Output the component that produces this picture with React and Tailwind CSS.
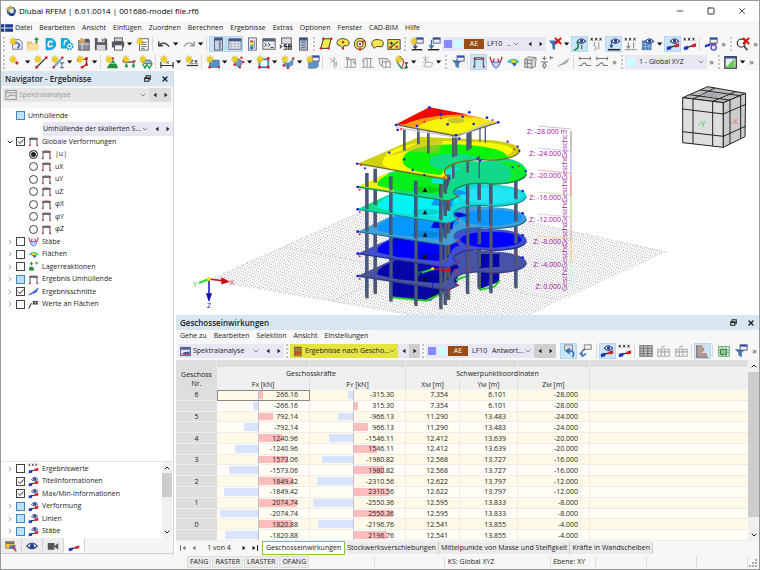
import { useState } from 'react';
import clsx from 'clsx';
import { ChevronDown, ChevronRight, ChevronUp, Minus, Square, X } from 'lucide-react';

const Star = () => (
  <path d="M4.5 0l.9 2.6 2.4-.9-1.2 2.4 2.4.9-2.4.9 1.2 2.3-2.4-.9-.9 2.5-.9-2.5-2.4.9 1.2-2.3-2.4-.9 2.4-.9-1.2-2.4 2.4.9z" fill="#f2cf1d" stroke="#b9a52c" strokeWidth=".3" />
);

const Eye = () => (
  <g>
    <path d="M5 5q4.500-6 9.500 0q-5 4.500-9.500 0z" fill="#fff" stroke="#28386f" strokeWidth="1.200" />
    <circle cx="9.800" cy="4.600" r="2" fill="#263d9b" />
  </g>
);

const Win = ({ x = 7, y = 1 }) => (
  <g>
    <rect x={x} y={y} width="8" height="6" fill="#eef" stroke="#44507c" />
    <rect x={x} y={y} width="8" height="2" fill="#3447a0" />
  </g>
);

const Beam = () => (
  <g>
    <path d="M1 11l5-1v4l-5 1z" fill="#1d35c8" />
    <path d="M5 11l6-2v1.500l-6 2z" fill="#222" />
    <path d="M10 8.500l5-1.500v4l-5 1z" fill="#d82121" />
  </g>
);

const Values = () => (
  <path d="M1 1l2 3m0-3l-2 3M6 1l2 3m0-3l-2 3M11 1l2 3m0-3l-2 3" stroke="#222" strokeWidth="1.100" />
);

const Cross = () => <path d="M8 1l7 7m0-7l-7 7" stroke="#e01010" strokeWidth="2.400" />;

const Dots = ({ points, color = '#d5202a', r = 1.4 }) =>
  points.map(([x, y]) => <circle key={`${x}-${y}`} cx={x} cy={y} r={r} fill={color} />);

const drawings = {
  app: <><path d="M2 6l4-4 6 1 3 5-2 5-6 2-4-4z" fill="#31569d" /><path d="M2 4l5-3 5 4-4 5-4-1z" fill="#c6ab55" /><circle cx="9" cy="8" r="3" fill="#dbe3ee" /><path d="M5 12l8 1-3 2z" fill="#172d62" /></>,
  flag: <><rect y="3" width="16" height="10" fill="#1b3b8e" /><path d="M0 8h16M5 3v10" stroke="#e6ebf7" strokeWidth="1.300" /></>,
  newModel: <><path d="M4 3h8l3 3v8H4z" fill="#e5eaf2" stroke="#68748c" /><path d="M6 8q3-3 6 1l-2 4" fill="none" stroke="#294f9e" strokeWidth="1.600" /><Star /></>,
  open: <><path d="M1 5h5l1 2h7v8H1z" fill="#e3c46f" /><path d="M3 8h12l-2 7H1z" fill="#f4dea0" /><path d="M11 7V3H9l3-3 3 3h-2v4z" fill="#259344" /></>,
  cloud: <><path d="M3 1h6q6 2 6 7t-6 7H3z" fill="#14a9e2" /><path d="M11 6q-4-3-5 2t5 2" fill="none" stroke="#fff" strokeWidth="2" /></>,
  cloudGear: <><path d="M1 1h7q4 2 4 6v6H1z" fill="#14a9e2" /><path d="M8 4q-4 0-3 5" fill="none" stroke="#fff" strokeWidth="1.500" /><circle cx="11" cy="10.500" r="3.500" fill="#fff" stroke="#1497d0" strokeWidth="2" strokeDasharray="2 1" /><circle cx="11" cy="10.500" r="1.300" fill="#1497d0" /></>,
  manager: <><rect x="2" y="4" width="12" height="11" fill="#8b929d" stroke="#555" /><path d="M2 8h12M6 4v11" stroke="#e7e7e7" /><path d="M4 1l7 2-3 5-6-3z" fill="#d4a667" /><rect x="9" y="2" width="5" height="4" fill="#4f5d78" /></>,
  save: <><path d="M1 1h12l2 2v12H1z" fill="#565a60" /><rect x="4" y="1" width="8" height="5" fill="#e9e9e9" /><rect x="3" y="9" width="10" height="6" fill="#d3d5d7" /><path d="M10 2v3" stroke="#555" strokeWidth="1.500" /></>,
  print: <><rect x="4" y="1" width="9" height="4" fill="#d3d3d3" stroke="#555" /><rect x="1" y="5" width="14" height="7" rx="1" fill="#565a60" /><rect x="4" y="9" width="9" height="6" fill="#f4f4f4" stroke="#555" /></>,
  report: <><rect x="4" y="2" width="10" height="13" fill="#fff" stroke="#555" /><path d="M6 6h6M6 8.500h6M6 11h6M6 13h4" stroke="#555" /><Star /></>,
  undo: <><path d="M2 5v5h5" fill="none" stroke="#3e4249" strokeWidth="1.700" /><path d="M2 10q6-7 12 1" fill="none" stroke="#3e4249" strokeWidth="1.700" /></>,
  redo: <><path d="M14 5v5H9" fill="none" stroke="#999" strokeWidth="1.500" /><path d="M14 10q-6-7-12 1" fill="none" stroke="#999" strokeWidth="1.500" /></>,
  navigator: <><rect x="4" y="1" width="9" height="14" fill="#ccd4e3" stroke="#555b68" /><rect x="4" y="1" width="9" height="3" fill="#44558b" /><path d="M10 5v9" stroke="#7781a1" strokeWidth="2" /></>,
  tables: <><rect x="1" y="2" width="14" height="12" fill="#e5e7ed" stroke="#646978" /><path d="M1 3.500h14" stroke="#44558b" strokeWidth="3" /><path d="M4 5v9M8 5v9M12 5v9M1 8h14M1 11h14" stroke="#a6abb7" strokeWidth=".7" /></>,
  colors: <><rect x="4" y="1" width="9" height="14" fill="#e5e9f2" stroke="#616977" /><path d="M6 4h3v2H6z" fill="#dd2424" /><path d="M6 6h3v3H6z" fill="#e8dc30" /><path d="M6 9h3v2H6z" fill="#35bf56" /><path d="M6 11h3v3H6z" fill="#3157cf" /><path d="M10.500 4v9" stroke="#666" /></>,
  console: <><rect x="1" y="2" width="14" height="12" fill="#e9eaee" stroke="#555" /><rect x="1" y="2" width="14" height="3" fill="#58637f" /><path d="M3 7l2 2-2 2M7 7l2 2-2 2M10 12h3" fill="none" stroke="#222" /></>,
  script: <><rect x="3" y="1" width="11" height="7" fill="#d7dce8" stroke="#555" /><rect x="1" y="8" width="14" height="7" fill="#fff" /><path d="M1 9l2 2-2 2M9 9H6v2h3v3H5M14 9h-3v5h3zM11 11h3" fill="none" stroke="#222" strokeWidth="1.200" /></>,
  info: <><rect x="4" y="1" width="9" height="14" fill="#bac3d5" stroke="#555" /><rect x="4" y="1" width="9" height="3" fill="#44558b" /><path d="M6 6h5M6 9h5M6 12h5" stroke="#6a7898" strokeWidth="1.500" /></>,
  selRhomb: <><path d="M5 2h9l-3 11H2z" fill="#f4e64c" stroke="#222" /><Dots points={[[5, 2], [14, 2], [11, 13], [2, 13]]} /></>,
  selEllipse: <><path d="M1 6q2-5 8-4t6 5-6 3l-1 3-3-3q-4 0-4-4z" fill="#f4e64c" stroke="#333" /><Dots points={[[8, 6], [8, 13]]} /></>,
  selRing: <><circle cx="8" cy="8" r="6.500" fill="#f4e64c" stroke="#333" /><circle cx="8" cy="8" r="3.500" fill="#fff" stroke="#333" /><Dots points={[[8, 8], [12, 5], [8, 14]]} /></>,
  selLasso: <><path d="M2 8q0-6 8-5t4 8H7l-2 2-1-2q-2 0-2-3z" fill="#f4e64c" stroke="#333" /></>,
  selPlus: <><rect x="1" y="3" width="14" height="11" fill="#f4e64c" stroke="#333" /><path d="M3 7h4M5 5v4M10 6h3M4 12l6-5" stroke="#333" strokeWidth="1.200" /><Dots points={[[4, 12], [11, 11]]} /></>,
  loadStar: <><path d="M6 5v7M3.500 10l2.500 3 2.500-3" fill="none" stroke="#223e83" strokeWidth="1.300" /><path d="M2 14.500h12" stroke="#222" strokeWidth="1.600" /><Win /><Star /></>,
  loadEdit: <><path d="M5 3v9M2.500 9l2.500 4 2.500-4" fill="none" stroke="#3166b8" strokeWidth="1.300" /><path d="M1 14.500h13" stroke="#222" strokeWidth="1.600" /><Win /></>,
  filterX: <><path d="M1 4h11L8 9v6l-3-2V9z" fill="#3f70b3" /><Cross /></>,
  springEye: <><path d="M1 15q5-1 5-5T4 6" fill="none" stroke="#23934a" strokeWidth="2" /><path d="M10 9v5" stroke="#333" /><Eye /></>,
  springVal: <><Values /><path d="M6 6q-3 3 0 5t-1 4M10 6v8" fill="none" stroke="#999" strokeWidth="1.300" /></>,
  loadEye: <><path d="M5 3v8M3 9l2 3 2-3" fill="none" stroke="#2954a0" strokeWidth="1.200" /><path d="M1 14.500h14" stroke="#222" strokeWidth="1.700" /><Eye /></>,
  loadVal: <><Values /><path d="M5 6v6M3 10l2 3 2-3M11 6v7" fill="none" stroke="#888" strokeWidth="1.200" /><path d="M1 14.500h14" stroke="#888" /></>,
  gridEye: <><rect x="1" y="4" width="11" height="11" fill="#4f80b7" /><path d="M1 8h11M1 11h11M5 4v11M9 4v11" stroke="#afd0ed" strokeWidth=".7" /><Eye /></>,
  beamEye: <><Beam /><Eye /></>,
  beamVal: <><Beam /><Values /></>,
  beam: <Beam />,
  beamWin: <><path d="M1 9l6-2v3l-6 2z" fill="#1d35c8" /><path d="M7 7h7v2H7z" fill="#d82121" /><Win /><circle cx="11" cy="12" r="3" fill="#e6eaff" stroke="#4257bb" strokeWidth="1.500" /></>,
  zoomX: <><circle cx="6" cy="7" r="4.500" fill="#fff" stroke="#444" strokeWidth="1.500" /><path d="M9 10l4 5" stroke="#444" strokeWidth="2" /><Cross /></>,
  node: <><Star /><Dots points={[[9, 9]]} r={1.8} /></>,
  line: <><path d="M3 14L14 3" stroke="#333" strokeWidth="1.400" /><Dots points={[[3, 14], [14, 3]]} r={1.7} /><Star /></>,
  member: <><path d="M3 14L13 3" stroke="#7ba2cd" strokeWidth="2.500" /><path d="M10 9h5M12.500 9v5M10 14.500h5" stroke="#55739b" strokeWidth="1.200" /><Dots points={[[3, 14], [13, 3]]} /><Star /></>,
  polyline: <><path d="M3 5h9v6l-5 3" fill="none" stroke="#8b2424" strokeWidth="1.600" /><Dots points={[[12, 4], [12, 11], [7, 14], [3, 6]]} r={1.7} /><Star /></>,
  support: <><path d="M9 5l-3 5 3-1 3 1z" fill="#1c953e" /><path d="M2 15l3-5h8l2 5z" fill="#1c953e" /><Dots points={[[9, 4]]} /><Star /></>,
  lineSupport: <><path d="M2 8h12" stroke="#333" strokeWidth="1.400" /><path d="M5 8l-2 6h4zM13 8l-2 6h4z" fill="#1c953e" /><Dots points={[[2, 7], [14, 7]]} /><Star /></>,
  surfSupport: <><path d="M3 6h10l2 4H6z" fill="#8bb6d8" stroke="#467" /><path d="M4 10l3 5 2-4 3 4 3-5" fill="none" stroke="#1c953e" strokeWidth="1.500" /><Star /></>,
  dimension: <><path d="M1 8v7M15 8v7M1 12h14" stroke="#333" strokeWidth="1.300" /><path d="M7 7l3 3m0-3l-3 3" stroke="#333" /><Star /></>,
  dimensionX: <><path d="M2 12h13" stroke="#333" strokeWidth="1.400" /><path d="M6 6l3 4m0-4l-3 4M11 6l3 4m0-4l-3 4" stroke="#333" strokeWidth="1.300" /><Star /></>,
  plate: <><rect x="4" y="6" width="11" height="8" fill="#5a8ec5" stroke="#4773a5" /><Dots points={[[4, 14], [15, 14]]} /><Star /></>,
  shell: <><path d="M4 6q5-4 9 2l-3 6-6-3z" fill="#6b9bcb" stroke="#496f9c" /><Dots points={[[12, 3], [14, 8], [10, 14], [4, 11]]} /><Star /></>,
  opening: <><rect x="4" y="5" width="10" height="9" fill="#fff" stroke="#3979ba" strokeWidth="2" /><Dots points={[[4, 14], [14, 14], [14, 4]]} r={1.7} /><Star /></>,
  solid: <><path d="M3 7l5 2 6-5v7l-6 4-5-3z" fill="#6295ca" /><path d="M8 9v6" stroke="#335f91" /><Dots points={[[14, 4], [8, 15], [3, 12]]} /><Star /></>,
  solidWin: <><path d="M3 7h8l3-2v8l-3 2H3z" fill="#5f93c8" stroke="#3e6798" strokeWidth=".7" /><Win /><Star /></>,
  greyStar: <path d="M8 2v11M3 4l7 5M10 3L4 9M9 8v7M11 7v6" stroke="#aaa" strokeWidth="1.100" />,
  greyLoad: <path d="M2 5h11v7M4 5v8M8 5v8M2 3h4M1 14h13M10 7l4 5" fill="none" stroke="#999" strokeWidth="1.200" />,
  greyLoad2: <path d="M3 4h10M3 4v9M7 4v9M11 4v9M1 14h14M1 7l5-4" fill="none" stroke="#999" strokeWidth="1.200" />,
  greyArea: <path d="M1 4h9l4 4v6H6L2 10zM5 4v9M9 5v9M4 8h9" fill="none" stroke="#999" strokeWidth="1.200" />,
  mode: <><path d="M7 2q-8 2-2 10t8 2" fill="none" stroke="#23934a" strokeWidth="1.700" /><path d="M4 3q9 1 4 11" fill="none" stroke="#d33" strokeWidth="1.300" /><path d="M11 9h4M13 9v5M11 14h4" stroke="#333" strokeWidth="1.200" /><Star /></>,
  greySurf: <path d="M3 2l7 7M10 2L3 9M6 1v9M4 13l4-5 7 1-3 5z" fill="none" stroke="#aaa" />,
  filterWin: <><path d="M1 6h12l-4 4v5l-4-2v-3z" fill="#4d79ad" /><Win /></>,
  frame: <><path d="M3 13V5l2-2h6l2 2v8M3 5h10" fill="none" stroke="#6b7078" strokeWidth="1.700" /><Dots points={[[3, 4], [13, 4], [2.5, 13.5], [13.5, 13.5]]} color="#a83030" r={1.3} /></>,
  moments: <><path d="M1 2l2 6h2l1-4M10 4l1 4h2l2-6" fill="none" stroke="#dd3434" strokeWidth="1.500" /><path d="M3 8h10l-2 5-3 2-3-2z" fill="#c9d0f6" stroke="#3b4edb" /></>,
  contour: <><path d="M1 8q6-7 14-1l-5 5-4-3z" fill="#28a9e8" /><path d="M4 6q5-3 11 2l-5 1z" fill="#3ad647" /><path d="M5 6q5-2 7 2l-5 1z" fill="#f4d51c" /><path d="M6 9l6 1-2 3z" fill="#294fe0" /></>,
  greyCube: <path d="M2 5l4-3 9 1-1 10-4 2-8-1zM2 5l8 1v9M10 6l4-3M5 5v9M2 9l8 1" fill="#ddd" stroke="#777" />,
  reaction: <path d="M5 1v5M2.500 4h5M1 8h8M5 9l-2 3 2 3 2-3zM11 3h4M12 1v4" fill="none" stroke="#777" strokeWidth="1.200" />,
  reactionColor: <path d="M5 1v5M2.500 4h5M3 9l-1 4h6L7 9zM11 3h4M12 1v4" fill="#24903c" stroke="#24903c" strokeWidth="1.500" />,
  section: <path d="M1 13L14 4l-3 5z" fill="#aaa" stroke="#999" strokeWidth=".6" />,
  sectionBlue: <path d="M1 13L15 3l-3 6z" fill="#4970ec" stroke="#365acb" />,
  sineA: <path d="M1 4h14M2 2v4M14 2v4M1 12h3q4-6 6 0h5" fill="none" stroke="#777" strokeWidth="1.200" />,
  meshView: <><rect x="1" y="2" width="13" height="13" fill="#e9eef1" stroke="#333" strokeWidth="1.500" /><path d="M2 14L12 4v10z" fill="#68cd57" /><path d="M1 3h13" stroke="#34559a" strokeWidth="2" /></>,
  spectral: <><rect x="1" y="2" width="14" height="12" fill="#e5e8ee" stroke="#44506d" strokeWidth="1.300" /><path d="M1 4h14" stroke="#4d62ac" strokeWidth="3" /><path d="M2 12l4-3 8-1v4z" fill="#344fb1" /><path d="M5 12h9" stroke="#d64747" strokeWidth="2" /></>,
  spectralGrey: <path d="M1 2h14v12H1zM1 5h14M3 11l4-3 7 1" fill="none" stroke="#999" strokeWidth="1.400" />,
  storeys: <><rect x="3" y="1" width="11" height="14" fill="#675d20" /><path d="M4 4h9M4 7h9M4 10h9M4 13h9" stroke="#e79a4b" strokeWidth="1.500" /><path d="M4 10h9" stroke="#ca3535" strokeWidth="2" /></>,
  valuesMark: <path d="M1 14l4-8M7 3l3 5m0-5L7 8M11 3l3 5m0-5l-3 5" stroke="#222" strokeWidth="1.500" />,
  syncA: <><rect x="3" y="1" width="9" height="6" fill="#ddd" stroke="#888" /><path d="M6 8h5q4 2 1 7M9 5L5 8l4 3" fill="none" stroke="#356bb6" strokeWidth="1.900" /></>,
  syncB: <><rect x="6" y="1" width="8" height="5" fill="#eee" stroke="#777" /><path d="M7 6q-6 2-3 8M1 10l3 4 4-3" fill="none" stroke="#356bb6" strokeWidth="1.600" /></>,
  greyTable: <><rect x="1" y="2" width="14" height="12" fill="#ccc" stroke="#777" strokeWidth="1.300" /><path d="M1 5h14M1 8h14M1 11h14M5 2v12M10 2v12" stroke="#777" strokeWidth="1.300" /></>,
  greyTab: <path d="M2 6h13v8H2zM2 9h13M6 6v8M10 6v8M6 4l4-2" fill="none" stroke="#aaa" strokeWidth="1.300" />,
  diagram: <><path d="M2 1v14h13" fill="none" stroke="#777" strokeWidth="1.500" /><path d="M3 2h5v3h2v3h-3v3h6v3H3z" fill="#9fae9c" stroke="#d56b6b" /></>,
  export: <><rect x="2" y="3" width="12" height="11" fill="#eef5ee" stroke="#4a9b57" /><path d="M2 7h12M2 10h12M6 3v11M10 3v11" stroke="#4a9b57" strokeWidth=".8" /><rect x="4" y="6" width="7" height="6" fill="#8fc396" stroke="#2e7d3c" /></>,
  project: <><rect x="1" y="2" width="11" height="9" fill="#f5c23e" stroke="#9b7920" /><path d="M1 4h11" stroke="#3f57a5" strokeWidth="2" /><rect x="6" y="7" width="8" height="5" fill="#4c79c8" /><path d="M10 9l5 6" stroke="#c33" strokeWidth="2" /></>,
  eye: <><path d="M1 8q7-8 14 0q-7 7-14 0z" fill="#fff" stroke="#28386f" strokeWidth="1.500" /><circle cx="8" cy="8" r="3" fill="#263d9b" /></>,
  camera: <><rect x="1" y="4" width="9" height="9" rx="1" fill="#555" /><path d="M10 8l5-4v9l-5-4z" fill="#555" /></>,
};

const Icon = ({ name, className = 'size-4' }) => (
  <svg viewBox="0 0 16 16" className={clsx('shrink-0', className)} fill="none" aria-hidden="true">
    {drawings[name]}
  </svg>
);

const ToolButton = ({ name, active }) => (
  <button
    type="button"
    aria-label={name}
    className={clsx('flex h-4 w-[17px] shrink-0 items-center justify-center', active && 'bg-[#cce4f7] outline outline-[#b4d7f3] -outline-offset-1')}
  >
    <Icon name={name} className="size-3.5" />
  </button>
);

const Triangle = ({ dir, className }) => (
  <svg viewBox="0 0 8 8" className={clsx('size-1.5', className)} aria-hidden="true">
    <path d={dir === 'left' ? 'M6 1v6L2 4z' : dir === 'right' ? 'M2 1v6l4-3z' : 'M0 2h7L3.500 6z'} fill="currentColor" />
  </svg>
);

const Caret = () => (
  <button type="button" aria-label="Mehr" className="flex h-4 w-2 shrink-0 items-center justify-center text-black">
    <Triangle dir="down" />
  </button>
);

const Separator = () => <div className="mr-0.5 ml-px h-3.5 w-px shrink-0 bg-[#dadada]" />;
const Grip = () => <div className="mx-0.5 h-3.5 shrink-0 border-l-2 border-dotted border-[#c4c4c4]" />;
const More = () => <button type="button" className="w-[9px] shrink-0 text-center text-[9px] leading-3 text-[#444]">»</button>;

// "|" separator, ":" grip, "v" caret, ">" overflow, a leading "*" marks a pressed button
const Tools = ({ items }) =>
  items.split(' ').map((item, i) => {
    if (item === '|') return <Separator key={i} />;
    if (item === ':') return <Grip key={i} />;
    if (item === 'v') return <Caret key={i} />;
    if (item === '>') return <More key={i} />;
    return <ToolButton key={i} name={item.replace('*', '')} active={item.startsWith('*')} />;
  });

const Stepper = ({ dir, className }) => (
  <button type="button" aria-label={dir} className={clsx('flex h-3.5 w-[11px] shrink-0 items-center justify-center', className)}>
    <Triangle dir={dir} />
  </button>
);

const Picker = ({ label, value, className, icon }) => (
  <label className={clsx('relative flex h-3.5 min-w-0 items-center', className)}>
    {icon}
    <select aria-label={label} className="min-w-0 flex-1 appearance-none overflow-hidden bg-transparent pr-2 leading-3 whitespace-nowrap outline-none">
      <option>{value}</option>
    </select>
    <ChevronDown className="pointer-events-none absolute right-0.5 size-2 text-[#555]" />
  </label>
);

const Swatches = () => (
  <>
    <span className="size-2 shrink-0 bg-[#8888ff]" />
    <span className="size-2 shrink-0 bg-[#ccffff]" />
    <span className="h-2.5 w-5 shrink-0 bg-[#994d12] text-center leading-[10px] text-white">AE</span>
  </>
);

const menus = ['Datei', 'Bearbeiten', 'Ansicht', 'Einfügen', 'Zuordnen', 'Berechnen', 'Ergebnisse', 'Extras', 'Optionen', 'Fenster', 'CAD-BIM', 'Hilfe'];

const Header = () => (
  <header>
    <div className="flex h-5 items-center pl-1">
      <Icon name="app" className="size-3" />
      <h1 className="ml-0.5 flex-1 text-[8px] leading-3 text-black">Dlubal RFEM | 6.01.0014 | 001686-model file.rf6</h1>
      <div className="flex items-center gap-[22px] pr-3 text-[#333]">
        <button type="button" aria-label="Minimieren"><Minus className="size-2.5" strokeWidth={2} /></button>
        <button type="button" aria-label="Maximieren"><Square className="size-2" strokeWidth={3} /></button>
        <button type="button" aria-label="Schließen"><X className="size-2.5" strokeWidth={2} /></button>
      </div>
    </div>
    <nav className="flex h-[13px] items-center bg-[#f7f7f7]">
      <Icon name="flag" className="size-3" />
      <div className="ml-0.5 flex gap-[7px]">
        {menus.map((m) => <button key={m} type="button">{m}</button>)}
      </div>
    </nav>
    <div className="flex h-[19px] items-center overflow-hidden bg-[#f7f7f7]">
      <Tools items=": newModel open cloud cloudGear manager save print v report | undo v redo v | *navigator *tables colors console script info : selRhomb selEllipse selRing selLasso selPlus : loadStar loadEdit" />
      <div className="flex h-3.5 w-[104px] shrink-0 items-center gap-0.5 bg-[#e8e8f4] pl-0.5">
        <Swatches />
        <span className="ml-px w-[18px] shrink-0">LF10</span>
        <Picker label="Lastfall" value=".." className="flex-1" />
        <div className="flex"><Stepper dir="left" /><Stepper dir="right" /></div>
      </div>
      <Tools items="filterX v *springEye springVal *loadEye loadVal gridEye v *beamEye beamVal | beamWin > : zoomX >" />
    </div>
    <div className="flex h-[18px] items-center overflow-hidden bg-[#f7f7f7]">
      <Tools items=": node v line member v polyline v | support lineSupport surfSupport | dimension v dimensionX | plate v shell v opening v solid v solidWin | greyStar greyLoad greyLoad2 greyArea mode v greySurf v : filterWin | *frame moments contour greyCube reaction section | sineA sineA > :" />
      <Picker
        label="Koordinatensystem"
        value="1 - Global XYZ"
        className="w-[82px] shrink-0 bg-[#e8e8f4]"
        icon={<span className="mr-1 ml-0.5 size-2 bg-[#ccffff]" />}
      />
      <Tools items="> : meshView v >" />
    </div>
  </header>
);

const PanelTitle = ({ children }) => (
  <div className="flex h-[15px] shrink-0 items-center bg-[#d8e6f2] px-1 text-[#222]">
    <h2 className="flex-1 text-[8px] leading-3 font-semibold">{children}</h2>
    <button type="button" aria-label="Lösen" className="mr-2.5">
      <svg viewBox="0 0 10 10" className="size-[7px]" fill="none" stroke="currentColor" strokeWidth="1.500"><path d="M3 3V1h6v5H7M1 4h6v5H1zM1 5h6" /></svg>
    </button>
    <button type="button" aria-label="Schließen"><X className="size-2" strokeWidth={4} /></button>
  </div>
);

const CheckBox = ({ label, checked, partial }) => {
  const [on, setOn] = useState(Boolean(checked));
  return (
    <span className="relative flex size-[9px] shrink-0">
      <input
        type="checkbox"
        aria-label={label}
        checked={on}
        onChange={() => setOn(!on)}
        className={clsx('size-[9px] appearance-none border', partial ? 'border-[#3c8ac4] bg-[#bfe0f8]' : 'border-[#444] bg-white')}
      />
      {on && (
        <svg viewBox="0 0 9 9" className="pointer-events-none absolute inset-0" fill="none" stroke="#222" strokeWidth="1"><path d="M2 4.500l2 2 3.500-4" /></svg>
      )}
    </span>
  );
};

const TreeRow = ({ label, icon, open, leaf, checked, partial }) => (
  <li className="flex items-center odd:h-[13px] even:h-3">
    <span className="flex w-[13px] items-center justify-center">
      {!leaf && (open ? <ChevronDown className="size-2 text-[#222]" strokeWidth={3} /> : <ChevronRight className="size-2 text-[#777]" />)}
    </span>
    <CheckBox label={label} checked={checked} partial={partial} />
    <Icon name={icon} className="mr-[3px] ml-[3px] size-[11px]" />
    <span>{label}</span>
  </li>
);

const components = [['|u|', ''], ['u', 'X'], ['u', 'Y'], ['u', 'Z'], ['φ', 'X'], ['φ', 'Y'], ['φ', 'Z']];

const tree = [
  { label: 'Stäbe', icon: 'moments' },
  { label: 'Flächen', icon: 'contour' },
  { label: 'Lagerreaktionen', icon: 'reactionColor' },
  { label: 'Ergebnis Umhüllende', icon: 'frame', partial: true },
  { label: 'Ergebnisschnitte', icon: 'sectionBlue', checked: true },
  { label: 'Werte an Flächen', icon: 'valuesMark' },
];

const displayOptions = [
  { label: 'Ergebniswerte', icon: 'beamVal' },
  { label: 'Titelinformationen', icon: 'beamEye', checked: true, leaf: true },
  { label: 'Max/Min-Informationen', icon: 'beamEye', checked: true, leaf: true },
  { label: 'Verformung', icon: 'beamEye', partial: true },
  { label: 'Linien', icon: 'beamEye', partial: true },
  { label: 'Stäbe', icon: 'beamEye', partial: true },
];

const Navigator = () => {
  const [component, setComponent] = useState('|u|');
  return (
    <aside className="flex w-[173px] shrink-0 flex-col border-r border-[#d5d5dd] bg-[#f5f5f5]">
      <PanelTitle>Navigator - Ergebnisse</PanelTitle>
      <div className="flex items-center px-0.5 pt-0.5 pb-1">
        <Picker
          label="Analyse"
          value="Spektralanalyse"
          className="flex-1 bg-[#e6e6e6] text-[#999]"
          icon={<Icon name="spectralGrey" className="mr-0.5 ml-0.5 size-3" />}
        />
        <Stepper dir="left" className="bg-[#dcdcdc]" />
        <Stepper dir="right" className="bg-[#dcdcdc]" />
      </div>
      <div className="mt-0.5 flex min-h-0 flex-1 flex-col bg-white pl-0.5">
        <label className="mt-px flex h-[13px] items-center gap-[3px] pl-[13px]">
          <CheckBox label="Umhüllende" partial />
          Umhüllende
        </label>
        <div className="flex h-[13px] items-center pl-10">
          <Picker label="Umhüllende Auswahl" value="Umhüllende der skalierten S..." className="flex-1 bg-[#e8e8f4]" />
          <Stepper dir="left" className="bg-[#e8e8f4]" />
          <Stepper dir="right" className="bg-[#e8e8f4]" />
        </div>
        <ul className="flex flex-col">
          <TreeRow label="Globale Verformungen" icon="frame" open checked />
          {components.map(([base, axis]) => (
            <li key={base + axis} className="odd:h-[13px] even:h-3">
              <label className="flex h-full items-center pl-[26px]">
                <input
                  type="radio"
                  name="component"
                  checked={component === base + axis}
                  onChange={() => setComponent(base + axis)}
                  className="size-[9px] appearance-none rounded-full border border-[#444] bg-white checked:bg-[#222] checked:shadow-[inset_0_0_0_1px_white]"
                />
                <Icon name="frame" className="mr-[3px] ml-[3px] size-[11px]" />
                {base}{axis}
              </label>
            </li>
          ))}
          {tree.map((row) => <TreeRow key={row.label} {...row} />)}
        </ul>
      </div>
      <div className="flex h-[77px] border-t border-[#e4e4e4] bg-white pl-0.5">
        <ul className="flex-1 overflow-hidden">
          {displayOptions.map((row) => <TreeRow key={row.label} {...row} />)}
        </ul>
        <div className="mr-px flex w-2.5 flex-col items-center bg-[#f0f0f0] py-0.5">
          <ChevronUp className="size-2" strokeWidth={3} />
          <div className="mt-px h-6 w-full bg-[#cdcdcd]" />
          <ChevronDown className="mt-auto size-2" strokeWidth={3} />
        </div>
      </div>
      <div className="mb-px flex h-4 border-b border-[#cfcfcf]">
        {['project', 'eye', 'camera', 'beam'].map((name) => (
          <button
            key={name}
            type="button"
            aria-label={name}
            className={clsx('flex w-[21px] items-center justify-center border-r border-[#d5d5d5]', name === 'beam' ? 'bg-white' : 'bg-[#ececec]')}
          >
            <Icon name={name} className="size-3" />
          </button>
        ))}
      </div>
    </aside>
  );
};

// slab outline, y measured from its left tip; drawing units are a third of a pixel
const slab = (y) =>
  `M50 ${y} L140 ${y - 42} L300 ${y - 84} L480 ${y - 72} C530 ${y - 68} 560 ${y - 52} 556 ${y - 38} C550 ${y - 18} 500 ${y - 10} 450 ${y - 9} C410 ${y - 16} 350 ${y - 12} 338 ${y + 12} C336 ${y + 22} 345 ${y + 24} 352 ${y + 28} L322 ${y + 42} Z`;

const slabEdge = (y) =>
  `M50 ${y} L322 ${y + 42} L352 ${y + 28} C345 ${y + 24} 336 ${y + 22} 338 ${y + 12} C350 ${y - 12} 410 ${y - 16} 450 ${y - 9} C500 ${y - 10} 550 ${y - 18} 556 ${y - 38}`;

const floors = [
  { y: 558, fill: '#4653a6', inner: '#0505a8', edge: '#35407f', wing: '#4653a6' },
  { y: 491, fill: '#3f4fd0', inner: '#0000fa', edge: '#28338c' },
  { y: 425, fill: '#43a0d6', inner: '#0698ff', edge: '#236e96', dark: '#0505e0' },
  { y: 358, fill: '#14dcd8', inner: '#02f3f3', edge: '#1b8d90', left: '#08df86', dark: '#0c98fa', wing: '#22e6f2' },
  { y: 291, fill: '#10dc8b', inner: '#06ee1c', edge: '#1c8b4b', left: '#f4f400', dark: '#08e9de', wing: '#14e39a' },
];

const columns = [[78, 0], [103, -13], [150, 10], [225, 23], [300, 33], [313, 20], [323, 5], [380, -13], [415, -28], [450, -15], [525, -30]];

const Columns = ({ y, height = 68 }) =>
  columns.map(([x, dy]) => (
    <g key={x}>
      <rect x={x - 5} y={y + dy - height} width="10" height={height} fill="#4f5c68" />
      <path d={`M${x - 4} ${y + dy - height + 2}v${height - 8}`} stroke="#2733c8" strokeWidth="2" />
    </g>
  ));

const roofNodes = [[165, 105], [265, 52], [385, 67], [438, 83], [472, 97], [355, 146], [345, 135], [170, 120], [320, 103], [228, 108], [365, 80], [300, 74], [398, 102]];
const topNodes = [[48, 221], [145, 188], [190, 208], [215, 240], [72, 235], [410, 205], [500, 155], [530, 170], [535, 182], [325, 265], [418, 212], [250, 255], [515, 232], [554, 243]];

const Building = () => (
  <g transform="translate(340 90) scale(.3333)">
    <path d="M150 548 L270 560 V632 L150 622Z" fill="#0606a2" />
    <path d="M270 560 L350 540 V575 L268 632Z" fill="#080887" />
    <path d="M415 500 H475 V575 L415 598Z" fill="#0808a0" />
    <path d="M148 622 L255 632 L300 612 L322 606 M345 570 L378 558 M415 600 L460 590 L476 572" fill="none" stroke="#25cf25" strokeWidth="6" />
    <Columns y={625} />
    {floors.map((f, i) => (
      <g key={f.y}>
        <path d={slab(f.y)} fill={f.fill} />
        {f.left && <path d={`M50 ${f.y} L140 ${f.y - 42} L160 ${f.y + 16}Z`} fill={f.left} />}
        <path d={`M110 ${f.y - 4} C100 ${f.y - 40} 230 ${f.y - 72} 330 ${f.y - 60} L355 ${f.y - 24} C320 ${f.y - 20} 345 ${f.y + 12} 290 ${f.y + 22} L170 ${f.y + 10}Z`} fill={f.inner} />
        <ellipse cx="450" cy={f.y - 42} rx="92" ry="24" fill={f.wing || f.inner} />
        {f.dark && <path d={`M270 ${f.y - 12} q20 -50 90 -45 l30 10 q-60 0 -55 40z`} fill={f.dark} />}
        <ellipse cx="255" cy={f.y + 8} rx="42" ry="10" fill="#000" opacity=".13" />
        <path d={slabEdge(f.y)} fill="none" stroke={f.edge} strokeWidth="4" />
        <path d={slabEdge(f.y - 3)} fill="none" stroke={f.fill} strokeWidth="1.500" />
        {i < 2 && <path d={`M150 ${f.y - 34} L285 ${f.y - 48} V${f.y - 66} H150Z`} fill="#0505b0" opacity=".6" />}
        {i < 1 && <path d={`M415 ${f.y - 66} h60 v38 l-60 4z`} fill="#0404a8" />}
        {i < 4 ? <Columns y={f.y} /> : <Columns y={f.y} height={42} />}
        <path d={`M245 ${f.y + 15} l7 -13 7 13z`} fill="#111" />
        <Dots points={[[50, f.y], [545, f.y - 55]]} color="#1717df" r={4} />
        <Dots points={[[56, f.y + 8], [322, f.y + 42], [350, f.y + 28], [450, f.y - 12], [523, f.y - 62], [380, f.y - 17]]} color="#e51c50" r={3} />
      </g>
    ))}

    {/* right wing of the -20 m slab stays visible beside the smaller top slab */}
    <path d="M330 262 C345 235 370 222 415 215 L500 205 C540 212 562 232 556 252 C548 272 500 283 450 282 C410 276 360 280 338 303 L318 300Z" fill="#12d98a" />
    <path d="M470 214 C535 210 562 234 556 252 C550 268 520 276 490 280 C520 262 520 232 470 214Z" fill="#0cee2c" />
    <path d="M338 303 C360 280 410 276 450 282 C500 283 548 272 556 252" fill="none" stroke="#1c8b4b" strokeWidth="4" />

    <path d="M50 221 L235 140 L400 148 C480 150 540 162 536 182 C530 205 470 214 420 209 C370 210 320 222 312 240 C308 254 315 258 325 264 L315 268Z" fill="#cfd010" />
    <path d="M125 226 C118 180 200 158 290 152 L400 156 C470 158 520 168 515 184 C500 205 440 208 420 207 C370 210 318 220 312 240 L318 262 L145 237Z" fill="#fbfb05" />
    <path d="M185 215 C180 175 260 160 370 164 C450 168 505 185 500 205 L420 208 C370 210 318 220 312 238 L300 255 Q190 245 185 215Z" fill="#08f408" />
    <path d="M265 215 C262 190 340 184 400 198 L425 207 C360 210 315 222 312 240 Q266 235 265 215Z" fill="#12dc86" />
    <path d="M130 202 L250 152 L310 150 L290 190 L200 184Z" fill="#b9bd2b" opacity=".6" />
    <path d="M50 221 L315 268 L325 264 C315 258 308 254 312 240 C320 222 370 210 420 209 C470 214 530 205 536 182" fill="none" stroke="#6a6c24" strokeWidth="4" />
    {[[190, 118, 182], [232, 112, 163], [262, 125, 190], [337, 138, 202], [345, 138, 198], [380, 125, 182], [388, 120, 176], [417, 105, 155], [433, 100, 158], [337, 225, 265], [380, 215, 248], [415, 205, 265]].map(([x, y1, y2]) => (
      <path key={`${x}-${y1}`} d={`M${x} ${y1}V${y2}`} stroke="#505b77" strokeWidth={x > 400 ? 4 : 8} />
    ))}
    <path d="M163 104 L265 52 L472 97 L345 138Z" fill="#f3e90c" />
    <path d="M163 104 L265 52 L445 88 Q300 66 225 112Z" fill="#ff9d0c" />
    <path d="M163 104 L265 52 L385 74 Q265 72 190 103Z" fill="#ee0808" />
    <path d="M238 104 Q330 65 420 108 L345 134Z" fill="#f6f60a" />
    <ellipse cx="345" cy="92" rx="26" ry="8" fill="#c8c626" />
    <path d="M163 104 L345 138 L472 97" fill="none" stroke="#626262" strokeWidth="4" />
    <path d="M165 112 L345 142 L455 92" fill="none" stroke="#c9c9c9" strokeWidth="4" />
    <Dots points={roofNodes} color="#1d1de0" r={4} />
    <Dots points={topNodes} color="#1d1de0" r={3.5} />
    <Dots points={[[60, 225], [310, 262], [415, 200], [180, 118], [455, 90], [520, 178], [534, 228], [300, 85], [250, 95]]} color="#f01c1c" r={3} />
    <path d="M275 537L242 548" stroke="#20e020" strokeWidth="6" />
    <path d="M275 537L330 542" stroke="#d01010" strokeWidth="5" />
    <path d="M318 534l14 8-14 6z" fill="#d01010" />
    <path d="M275 540v80" stroke="#0909a8" strokeWidth="2" />
    <circle cx="275" cy="536" r="5" fill="#f4e318" />
    <text x="340" y="552" fontSize="20" fill="#e02020">X</text>
    <text x="228" y="558" fontSize="20" fill="#20c020">Y</text>
  </g>
);

const levels = [
  ['-28.000 m', 131, '#a08070'], ['-24.000', 153, '#9a9af0'], ['-20.000', 175, '#f06060'], ['-16.000', 197, '#a6d060'],
  ['-12.000', 219, '#d49a9a'], ['-8.000', 241, '#f0c858'], ['-4.000', 264, '#b8f0f0'], ['0.000', 286, ''],
];

const ViewCube = () => (
  <g transform="translate(660 75) scale(.3333)" stroke="#222" strokeWidth="3" strokeLinejoin="round">
    <path d="M65 68L140 35L254 55L187 83Z" fill="#bcbcbc" />
    <path d="M65 68L187 83V217L65 203Z" fill="#dedede" />
    <path d="M187 83L254 55L252 185L187 217Z" fill="#cccccc" />
    <path d="M65 102L187 117L254 88M65 170L187 184L253 154M96 72V207M155 79V213M207 75V207M239 62V191M96 72L162 39M155 79L224 50M85 59L205 75M118 45L238 62" fill="none" />
    <path d="M118 60l30-8 40 6-28 10z" fill="#aaaab5" stroke="none" />
    <text x="111" y="156" fontSize="24" fontWeight="600" fill="#50d860" stroke="none">-Y</text>
    <text x="210" y="148" fontSize="22" fontWeight="600" fill="#ee7474" stroke="none">-X</text>
    <text x="140" y="67" fontSize="13" fill="#8c8ccc" stroke="none">+Z</text>
  </g>
);

const Scene = () => (
  <svg viewBox="175 71 583 244" className="min-h-0 w-full flex-1 bg-white" role="img" aria-label="Modell">
    <defs>
      <pattern id="grid" width="4" height="3" patternUnits="userSpaceOnUse" patternTransform="rotate(10)">
        <rect width="1" height=".9" fill="#8c8c8c" />
        <rect x="2" y="1.500" width="1" height=".9" fill="#8c8c8c" />
      </pattern>
    </defs>
    <path d="M208 280L400 194L666 252L528 315H410Z" fill="url(#grid)" />
    <path d="M208 280L400 194L666 252M208 280L410 315M284 247L560 300M330 301L520 221" fill="none" stroke="#b4b4b4" strokeWidth=".5" strokeDasharray="3 2" />
    <Building />
    {levels.map(([z, y, color], i) => (
      <g key={z} fill="#a0109c">
        <path d={`M537 ${y - 5}l33 3`} stroke={color || '#ddd'} strokeWidth=".5" />
        <text x={i === 0 ? 526 : 560} y={y + 3} fontSize="7" textAnchor={i === 0 ? 'start' : 'end'}>Z: {z}</text>
        {color && <path d={`M570 ${y}v22`} stroke={color} />}
        {color && <text transform={`translate(566 ${y + 27}) rotate(-90)`} fontSize="7">Geschc</text>}
      </g>
    ))}
    <path d="M208 279L198 283" stroke="#20e020" strokeWidth="2" />
    <path d="M208 279L224 281M221 278.500l6 3-6 2z" stroke="#d01010" fill="#d01010" strokeWidth="1.500" />
    <path d="M208 280v17M206 294l2 6 2-6z" stroke="#1010b0" fill="#1010b0" strokeWidth="1.500" />
    <circle cx="208" cy="279" r="2" fill="#f4e318" />
    <text x="229" y="285" fontSize="7" fill="#e02020">X</text>
    <text x="192" y="287" fontSize="7" fill="#20c020">Y</text>
    <text x="206" y="308" fontSize="7" fill="#2020c0">Z</text>
    <ViewCube />
  </svg>
);

const rows = [
  ['6', 266.16, -315.3, '7.354', '6.101', '-28.000'],
  ['', -266.16, 315.3, '7.354', '6.101', '-28.000'],
  ['5', 792.14, -966.13, '11.290', '13.483', '-24.000'],
  ['', -792.14, 966.13, '11.290', '13.483', '-24.000'],
  ['4', 1240.96, -1546.11, '12.412', '13.639', '-20.000'],
  ['', -1240.96, 1546.11, '12.412', '13.639', '-20.000'],
  ['3', 1573.06, -1980.82, '12.568', '13.727', '-16.000'],
  ['', -1573.06, 1980.82, '12.568', '13.727', '-16.000'],
  ['2', 1849.42, -2310.56, '12.622', '13.797', '-12.000'],
  ['', -1849.42, 2310.56, '12.622', '13.797', '-12.000'],
  ['1', 2074.74, -2550.36, '12.595', '13.833', '-8.000'],
  ['', -2074.74, 2550.36, '12.595', '13.833', '-8.000'],
  ['0', 1820.88, -2196.76, '12.541', '13.855', '-4.000'],
  ['', -1820.88, 2196.76, '12.541', '13.855', '-4.000'],
];

const ForceCell = ({ value, max, selected }) => {
  const width = `${(Math.abs(value) / max) * 42}%`;
  return (
    <td className={clsx('relative border-r border-b border-[#ececec] pr-[11px] text-right', selected && 'outline outline-[#888] -outline-offset-1')}>
      <span
        className={clsx('absolute inset-y-0 my-px', value > 0 ? 'left-[45%] bg-[#ffbcbc]' : 'right-[55%] bg-[#d8e4ff]')}
        style={{ width }}
      />
      <span className="absolute inset-y-0 left-[45%] w-px bg-[#c8c0cc]" />
      <span className="relative">{value.toFixed(2)}</span>
    </td>
  );
};

const Axis = ({ base, axis, unit }) => <>{base}<span className="text-[6px]">{axis}</span> [{unit}]</>;

const headCell = 'border-r border-[#dcdcdc] bg-[#f0f0f0] font-normal';

const StoreyTable = () => (
  <div className="flex h-[181px] shrink-0 overflow-hidden">
    <table className="h-full flex-1 table-fixed border-separate border-spacing-0 leading-[9px]">
      <colgroup>
        <col className="w-[41px]" /><col className="w-[93px]" /><col className="w-24" /><col className="w-[54px]" /><col className="w-[58px]" /><col className="w-[72px]" /><col />
      </colgroup>
      <thead>
        <tr className="h-[7px]">
          {[0, 1, 2, 3, 4, 5, 6].map((i) => <td key={i} className="border-r border-[#ededed] bg-[#dedede]" />)}
        </tr>
        <tr className="h-3">
          <th rowSpan={2} scope="col" className="bg-[#dedede] font-normal leading-[9px]">Geschoss<br />Nr.</th>
          <th colSpan={2} scope="colgroup" className={headCell}>Geschosskräfte</th>
          <th colSpan={3} scope="colgroup" className={headCell}>Schwerpunktkoordinaten</th>
          <td rowSpan={2} className="bg-[#f0f0f0]" />
        </tr>
        <tr className="h-[11px]">
          <th scope="col" className={headCell}><Axis base="F" axis="X" unit="kN" /></th>
          <th scope="col" className={headCell}><Axis base="F" axis="Y" unit="kN" /></th>
          <th scope="col" className={headCell}><Axis base="X" axis="M" unit="m" /></th>
          <th scope="col" className={headCell}><Axis base="Y" axis="M" unit="m" /></th>
          <th scope="col" className={headCell}><Axis base="Z" axis="M" unit="m" /></th>
        </tr>
      </thead>
      <tbody>
        {rows.map(([storey, fx, fy, ...coords], i) => (
          <tr key={i} className="odd:bg-[#fff9e8] even:bg-[#fffdf5]">
            <th scope="row" className="border-b border-[#ececec] bg-[#dedede] font-normal">{storey}</th>
            <ForceCell value={fx} max={2074.74} selected={i === 0} />
            <ForceCell value={fy} max={2550.36} />
            {coords.map((c, j) => <td key={j} className="border-r border-b border-[#ececec] pr-[11px] text-right">{c}</td>)}
            <td className="border-b border-[#ececec]" />
          </tr>
        ))}
      </tbody>
    </table>
    <div className="flex w-[11px] flex-col items-center bg-[#f0f0f0] py-0.5">
      <ChevronUp className="size-2" strokeWidth={3} />
      <div className="my-0.5 w-full flex-1 bg-[#cdcdcd]" />
      <ChevronDown className="mt-3 size-2" strokeWidth={3} />
    </div>
  </div>
);

const sheets = ['Geschosseinwirkungen', 'Stockwerksverschiebungen', 'Mittelpunkte von Masse und Steifigkeit', 'Kräfte in Wandscheiben'];

const StoreyPanel = () => (
  <section className="flex shrink-0 flex-col bg-[#f7f7f7]">
    <PanelTitle>Geschosseinwirkungen</PanelTitle>
    <nav className="flex h-3 items-center gap-[7px] px-1">
      {['Gehe zu', 'Bearbeiten', 'Selektion', 'Ansicht', 'Einstellungen'].map((m) => <button key={m} type="button">{m}</button>)}
    </nav>
    <div className="flex h-[18px] items-center">
      <Picker label="Analyse" value="Spektralanalyse" className="ml-0.5 w-[84px] bg-[#e8e8f4]" icon={<Icon name="spectral" className="mr-0.5 ml-0.5 size-[11px]" />} />
      <Stepper dir="left" className="bg-[#e8e8f4]" />
      <Stepper dir="right" className="bg-[#e8e8f4]" />
      <Grip />
      <Picker label="Ergebnisse" value="Ergebnisse nach Gescho..." className="w-[108px] bg-[#e5e33f]" icon={<Icon name="storeys" className="mr-0.5 ml-0.5 size-[11px]" />} />
      <Stepper dir="left" className="bg-[#e8e8f4]" />
      <Stepper dir="right" className="bg-[#cfcfcf]" />
      <Grip />
      <div className="flex h-3.5 w-[108px] shrink-0 items-center gap-0.5 bg-[#e8e8f4] pl-0.5">
        <Swatches />
        <span className="ml-0.5 w-[18px] shrink-0">LF10</span>
        <Picker label="Lastfall" value="Antwort..." className="flex-1" />
      </div>
      <Stepper dir="left" className="bg-[#cfcfcf]" />
      <Stepper dir="right" className="bg-[#cfcfcf]" />
      <div className="flex flex-1 items-center justify-between pl-1">
        <Tools items="*syncA syncB | *beamEye beamVal | greyTable greyTab greyTab | *diagram | export filterWin >" />
      </div>
    </div>
    <StoreyTable />
    <div className="flex h-3.5 items-center">
      <div className="flex w-[86px] items-center justify-between px-1">
        <button type="button" aria-label="Erste" className="flex text-[#777]"><i className="h-1.5 w-px bg-current" /><Triangle dir="left" /></button>
        <button type="button" aria-label="Zurück" className="text-[#777]"><Triangle dir="left" /></button>
        <span className="px-1.5">1 von 4</span>
        <button type="button" aria-label="Weiter"><Triangle dir="right" /></button>
        <button type="button" aria-label="Letzte" className="flex"><Triangle dir="right" /><i className="h-1.5 w-px bg-current" /></button>
      </div>
      {sheets.map((s, i) => (
        <button
          key={s}
          type="button"
          className={clsx('leading-3 whitespace-nowrap', i === 0 ? 'border border-[#84c83c] bg-white px-[3px]' : 'border-r border-[#ccc] bg-[#ebebeb] px-0.5')}
        >
          {s}
        </button>
      ))}
    </div>
  </section>
);

const StatusBar = () => (
  <footer className="flex h-3.5 shrink-0 items-center gap-px bg-[#f7f7f7] pl-[186px]">
    {['FANG', 'RASTER', 'LRASTER', 'OFANG'].map((s) => (
      <button key={s} type="button" className="border border-[#dcdcdc] bg-[#ececec] px-0.5 leading-[10px]">{s}</button>
    ))}
    <div className="ml-16 h-3 w-[71px] border-x border-[#ddd]" />
    <span className="w-[104px] pl-0.5">KS: Global XYZ</span>
    <span className="w-[46px] border-x border-[#ddd] pl-0.5">Ebene: XY</span>
    <div className="h-3 w-[50px] border-r border-[#ddd]" />
    <div className="h-3 w-[50px] border-r border-[#ddd]" />
    <div className="h-3 w-[50px] border-r border-[#ddd]" />
    <svg viewBox="0 0 8 8" className="mt-auto mr-0.5 mb-0.5 ml-auto size-2"><path d="M6 0h2v2H6zM3 3h2v2H3zM6 3h2v2H6zM0 6h2v2H0zM3 6h2v2H3zM6 6h2v2H6z" fill="#aaa" /></svg>
  </footer>
);

const App = () => {
  return (
    <div className="flex h-screen flex-col overflow-hidden border border-[#999] bg-white font-['Open_Sans','Noto_Sans',sans-serif] text-[7px] leading-[10px] text-[#222]">
      <Header />
      <div className="flex min-h-0 flex-1">
        <Navigator />
        <main className="ml-0.5 flex min-w-0 flex-1 flex-col">
          <Scene />
          <StoreyPanel />
        </main>
      </div>
      <StatusBar />
    </div>
  );
};

export default App;
